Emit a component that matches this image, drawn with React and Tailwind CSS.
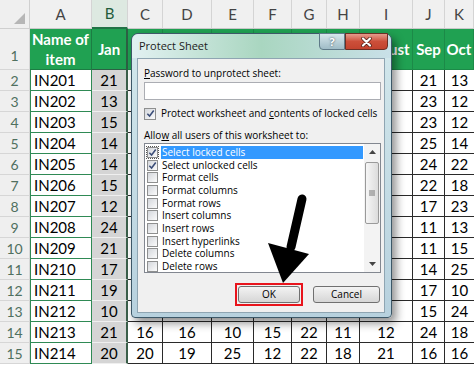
import React from "react";

const names = ["IN201", "IN202", "IN203", "IN204", "IN205", "IN206", "IN207", "IN208", "IN209", "IN210", "IN211", "IN212", "IN213", "IN214"];
const jan = [21, 13, 15, 14, 14, 15, 12, 24, 21, 17, 19, 10, 21, 20];
const sep = [21, 23, 23, 25, 24, 22, 17, 11, 11, 14, 17, 15, 24, 16];
const oct = [13, 12, 12, 14, 22, 18, 23, 13, 15, 25, 10, 24, 18, 16];
// columns C..I are hidden behind the dialog except the last two rows
const middle = {
  12: [16, 16, 10, 15, 22, 11, 12],
  13: [20, 19, 25, 12, 22, 18, 21],
};
const letters = ["A", "B", "C", "D", "E", "F", "G", "H", "I", "J", "K"];
// only the tail of "August" peeks out from behind the dialog
const months = ["", "", "", "", "", "", "August"];

const options = [
  { label: "Select locked cells", checked: true },
  { label: "Select unlocked cells", checked: true },
  { label: "Format cells" },
  { label: "Format columns" },
  { label: "Format rows" },
  { label: "Insert columns" },
  { label: "Insert rows" },
  { label: "Insert hyperlinks" },
  { label: "Delete columns" },
  { label: "Delete rows" },
];

function Check({ checked, size = "w-[11px] h-[11px]" }) {
  return (
    <div className={`${size} shrink-0 border border-[#8e8f8f] bg-gradient-to-br from-[#d4d7dc] to-[#fbfbfb] flex items-center justify-center`}>
      {checked && (
        <svg viewBox="0 0 10 10" className="w-[9px] h-[9px]">
          <path d="M1.5 5.2 L4 7.8 L8.6 1.6" fill="none" stroke="#3b4d78" strokeWidth="1.7" />
        </svg>
      )}
    </div>
  );
}

function Sheet() {
  const cells = [];
  // column header row
  cells.push(
    <div key="corner" className="bg-[#efefef] border-r border-b border-[#cfcfcf] relative">
      <svg className="absolute right-[4px] bottom-[4px]" width="11" height="11" viewBox="0 0 11 11">
        <polygon points="11,0 11,11 0,11" fill="#b6b6b6" />
      </svg>
    </div>
  );
  letters.forEach((l) => {
    const sel = l === "B";
    cells.push(
      <div
        key={"h" + l}
        className={`flex items-center justify-center text-[15px] border-r border-[#d4d4d4] ${
          sel ? "bg-[#dde9e1] border-b-2 border-b-[#217346] text-[#1e5c3a]" : "bg-[#f0f0f0] border-b border-b-[#c9c9c9] text-[#444]"
        }`}
      >
        {l}
      </div>
    );
  });

  // row 1 (green header)
  cells.push(
    <div key="r1" className="bg-[#efefef] border-r border-b border-[#d6d6d6] flex items-end justify-center pb-[3px] text-[14px] text-[#50705f]">
      1
    </div>
  );
  cells.push(
    <div key="r1a" className="bg-[#20a152] border-r border-b border-[#1c7d43] flex items-center justify-center text-center text-white font-bold text-[15px] leading-[20px]">
      Name of
      <br />
      item
    </div>
  );
  cells.push(
    <div key="r1b" className="bg-[#20a152] border-r-2 border-b border-[#2d6044] flex items-center justify-center text-white font-bold text-[15px]">
      Jan
    </div>
  );
  months.forEach((m, idx) => {
    cells.push(
      <div key={"r1m" + idx} className="bg-[#20a152] border-r border-b border-[#1c8a48] flex items-center justify-center text-white font-bold text-[15px] overflow-hidden whitespace-nowrap">
        {m}
      </div>
    );
  });
  ["Sep", "Oct"].forEach((m) => {
    cells.push(
      <div key={"r1" + m} className="bg-[#20a152] border-r border-b border-[#1c8a48] flex items-center justify-center text-white font-bold text-[15px]">
        {m}
      </div>
    );
  });

  names.forEach((name, i) => {
    cells.push(
      <div key={"n" + i} className="bg-[#efefef] border-r border-b border-[#d6d6d6] flex items-center justify-center text-[14px] text-[#50705f]">
        {i + 2}
      </div>
    );
    cells.push(
      <div key={"a" + i} className="bg-white border-l border-r border-b border-[#2f8a55] flex items-center pl-[3px] text-[15px] text-black">
        {name}
      </div>
    );
    cells.push(
      <div key={"b" + i} className="bg-[#d5d5d5] border-b border-b-[#efefef] border-r-2 border-r-[#3b5f4a] flex items-center justify-center text-[15px] text-black">
        {jan[i]}
      </div>
    );
    for (let c = 0; c < 7; c++) {
      cells.push(
        <div key={"m" + i + c} className="bg-white border-r border-b border-[#2a2a2a] flex items-center justify-center text-[15px] text-black">
          {middle[i] ? middle[i][c] : ""}
        </div>
      );
    }
    cells.push(
      <div key={"j" + i} className="bg-white border-r border-b border-[#2a2a2a] flex items-center justify-center text-[15px] text-black">
        {sep[i]}
      </div>
    );
    cells.push(
      <div key={"k" + i} className="bg-white border-b border-[#2a2a2a] flex items-center justify-center text-[15px] text-black">
        {oct[i]}
      </div>
    );
  });

  return (
    <div className="grid grid-cols-[30px_62px_36px_35px_49px_42px_38px_35px_33px_53px_32px_29px] grid-rows-[29px_41px_repeat(14,21px)] font-['Lato',sans-serif]">
      {cells}
    </div>
  );
}

function Dialog() {
  return (
    <div className="absolute left-[131px] top-[33px] w-[261px] h-[285px] rounded-t-[7px] rounded-b-[4px] border border-[#3d5868] bg-gradient-to-b from-[#d3e8ec] to-[#b7d1de] shadow-[4px_5px_10px_rgba(0,0,0,0.45)] flex flex-col font-['Open_Sans',sans-serif] text-[10px] text-black whitespace-nowrap">
      <div className="h-[24px] shrink-0 relative flex items-center pl-[7px] rounded-t-[7px] bg-gradient-to-r from-[#e2f1f2] via-[#a9d6c0] to-[#c9e0e8]">
        <span className="text-[11px] text-[#1c1c1c]">Protect Sheet</span>
        <div className="absolute top-[-1px] right-[46px] w-[26px] h-[17px] rounded-bl-[4px] border border-[#5f7a88] bg-gradient-to-b from-[#d7e7ec] to-[#9fbcc6] flex items-center justify-center">
          <span className="text-white font-bold text-[11px] leading-none [text-shadow:0_0_2px_#2c3e48]">?</span>
        </div>
        <div className="absolute top-[-1px] right-[3px] w-[43px] h-[17px] rounded-br-[4px] border border-[#6b2f25] bg-gradient-to-b from-[#e49a8c] via-[#cc4f3a] to-[#c2432f] flex items-center justify-center">
          <svg width="13" height="10" viewBox="0 0 13 10">
            <path d="M3 1.5 L10 8.5 M10 1.5 L3 8.5" stroke="#4a1a12" strokeWidth="3.6" strokeLinecap="round" />
            <path d="M3 1.5 L10 8.5 M10 1.5 L3 8.5" stroke="#ffffff" strokeWidth="2.2" strokeLinecap="round" />
          </svg>
        </div>
      </div>
      <div className="ml-[5px] mr-[6px] mb-[4px] flex-1 border border-[#8fa5b2] bg-[#f0f0f0] pl-[6px] pr-[3px] pt-[7px] flex flex-col">
        <div className="leading-[14px] shrink-0">
          <span className="underline">P</span>assword to unprotect sheet:
        </div>
        <div className="mt-[2px] h-[18px] shrink-0 bg-white border border-[#abadb3]" />
        <div className="mt-[7px] h-[13px] shrink-0 flex items-center gap-[5px]">
          <Check checked size="w-[12px] h-[12px]" />
          <span>
            Protect worksheet and <span className="underline">c</span>ontents of locked cells
          </span>
        </div>
        <div className="mt-[8px] leading-[14px] shrink-0">
          Allo<span className="underline">w</span> all users of this worksheet to:
        </div>
        <div className="mt-[1px] h-[130px] shrink-0 bg-white border border-[#828790] relative overflow-hidden">
          <div className="pt-[2px] pl-[2px] pr-[17px] flex flex-col">
            {options.map((o, i) => (
              <div key={o.label} className="h-[12.7px] shrink-0 flex items-center">
                <div className={i === 0 ? "outline outline-1 outline-dotted outline-[#555] flex" : "flex"}>
                  <Check checked={o.checked} />
                </div>
                <div className={`ml-[3px] flex-1 h-full flex items-center pl-[1px] ${i === 0 ? "bg-[#3399ff] text-white" : ""}`}>
                  {o.label}
                </div>
              </div>
            ))}
          </div>
          <div className="absolute right-0 top-0 bottom-0 w-[16px] bg-[#f3f3f3] flex flex-col items-center">
            <div className="h-[16px] flex items-center justify-center">
              <svg width="7" height="4" viewBox="0 0 7 4"><polygon points="3.5,0 7,4 0,4" fill="#444" /></svg>
            </div>
            <div className="mt-[2px] w-[14px] h-[62px] rounded-[2px] border border-[#9a9a9a] bg-gradient-to-r from-[#f6f6f6] to-[#dcdcdc] flex items-center justify-center">
              <svg width="6" height="6" viewBox="0 0 6 6">
                <path d="M0 1 H6 M0 3 H6 M0 5 H6" stroke="#777" strokeWidth="1" />
              </svg>
            </div>
            <div className="flex-1" />
            <div className="h-[16px] flex items-center justify-center">
              <svg width="7" height="4" viewBox="0 0 7 4"><polygon points="0,0 7,0 3.5,4" fill="#444" /></svg>
            </div>
          </div>
        </div>
        <div className="mt-[10px] shrink-0 flex justify-end items-center gap-[10px] pr-[1px]">
          <div className="border-2 border-[#e8141c] p-[1px]">
            <div className="w-[62px] h-[17px] rounded-[3px] border border-[#707070] bg-gradient-to-b from-[#f3f3f3] to-[#d6d6d6] flex items-center justify-center">
              OK
            </div>
          </div>
          <div className="w-[67px] h-[17px] rounded-[3px] border border-[#707070] bg-gradient-to-b from-[#f3f3f3] to-[#d6d6d6] flex items-center justify-center">
            Cancel
          </div>
        </div>
      </div>
    </div>
  );
}

export default function App() {
  return (
    <div className="relative w-[474px] h-[366px] overflow-hidden bg-white">
      <Sheet />
      <Dialog />
      <svg className="absolute left-0 top-0 pointer-events-none" width="474" height="366" viewBox="0 0 474 366">
        <path d="M302 199 L291 247" stroke="#000" strokeWidth="9" strokeLinecap="round" />
        <polygon points="268,243 309,254 283,283" fill="#000" />
      </svg>
    </div>
  );
}
